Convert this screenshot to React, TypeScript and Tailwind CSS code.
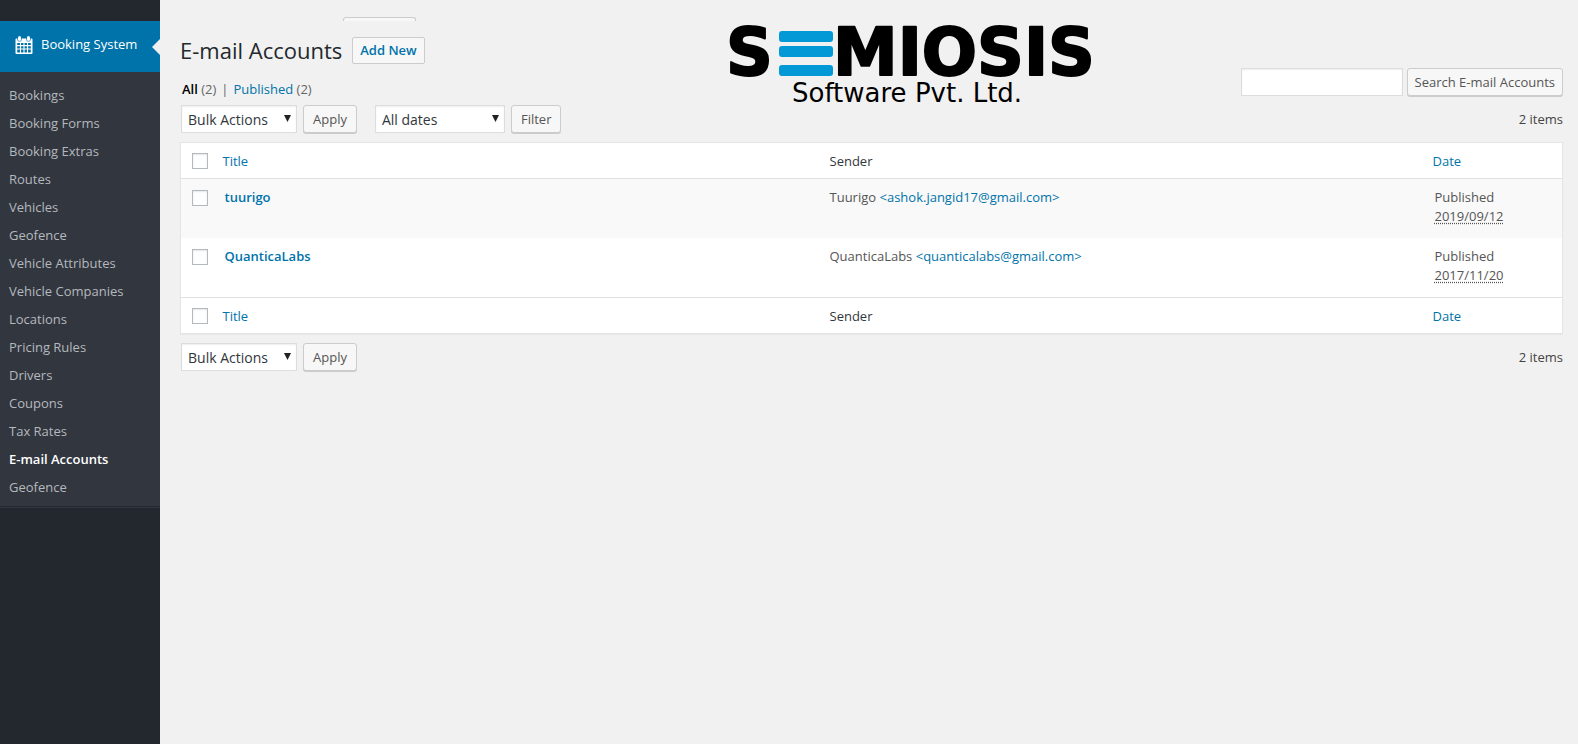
import type { ReactNode } from "react";

interface Account {
  title: string;
  sender: string;
  email: string;
  date: string;
}

const MENU_ITEMS = [
  "Bookings",
  "Booking Forms",
  "Booking Extras",
  "Routes",
  "Vehicles",
  "Geofence",
  "Vehicle Attributes",
  "Vehicle Companies",
  "Locations",
  "Pricing Rules",
  "Drivers",
  "Coupons",
  "Tax Rates",
  "E-mail Accounts",
  "Geofence",
];

const ACCOUNTS: Account[] = [
  { title: "tuurigo", sender: "Tuurigo", email: "ashok.jangid17@gmail.com", date: "2019/09/12" },
  { title: "QuanticaLabs", sender: "QuanticaLabs", email: "quanticalabs@gmail.com", date: "2017/11/20" },
];

function CalendarIcon() {
  return (
    <svg width="18" height="18" viewBox="0 0 18 18" fill="white" aria-hidden="true">
      <rect x="3" y="0" width="3" height="5" rx="1.5" />
      <rect x="12" y="0" width="3" height="5" rx="1.5" />
      <path
        fillRule="evenodd"
        d="M1.5 2.5H2.4V4Q2.4 5.6 4.5 5.6T6.6 4V2.5H11.4V4Q11.4 5.6 13.5 5.6T15.6 4V2.5H16.5Q17.5 2.5 17.5 3.5V17Q17.5 18 16.5 18H1.5Q.5 18 .5 17V3.5Q.5 2.5 1.5 2.5ZM2.2 7V16.4H15.8V7Z"
      />
      <path d="M2 9.6H16M2 13H16M5.5 7V17M9 7V17M12.5 7V17" stroke="white" strokeWidth="1.1" />
    </svg>
  );
}

function Logo() {
  return (
    <svg width="376" height="84" viewBox="0 0 376 84" className="overflow-visible" role="img" aria-label="Semiosis Software Pvt. Ltd.">
      <g className="font-['DejaVu_Sans'] font-bold" fontSize="65" fill="black" stroke="black" strokeWidth="2" strokeLinejoin="round">
        <text x="4" y="54">S</text>
        <text x="111" y="54">MIOSIS</text>
      </g>
      <g fill="#0299d6">
        <rect x="57" y="10" width="54" height="11" rx="3" />
        <rect x="57" y="25" width="54" height="11" rx="3" />
        <rect x="57" y="44" width="54" height="11" rx="3" />
      </g>
      <text x="70" y="81" className="font-['DejaVu_Sans']" fontSize="26" fill="black">
        Software Pvt. Ltd.
      </text>
    </svg>
  );
}

function Button({ children, padding = "px-[9px]" }: { children: ReactNode; padding?: string }) {
  return (
    <button
      type="button"
      className={`h-7 rounded-[3px] border border-[#ccc] bg-[#f7f7f7] text-[13px] leading-[26px] whitespace-nowrap text-[#555] shadow-[0_1px_0_#ccc] ${padding}`}
    >
      {children}
    </button>
  );
}

function Select({ label, option, width }: { label: string; option: string; width: string }) {
  return (
    <div className={`relative ${width}`}>
      <select
        aria-label={label}
        className="block h-7 w-full appearance-none border border-[#ddd] bg-white pl-[6px] text-[14px] text-[#32373c] shadow-[inset_0_1px_2px_rgba(0,0,0,0.07)]"
      >
        <option>{option}</option>
      </select>
      <svg className="pointer-events-none absolute top-[10px] right-[6px]" width="7" height="7" viewBox="0 0 7 7" aria-hidden="true">
        <path d="M0 0H7L3.5 7Z" fill="#222" />
      </svg>
    </div>
  );
}

function Checkbox({ label }: { label: string }) {
  return (
    <input
      type="checkbox"
      aria-label={label}
      className="block size-4 appearance-none border border-[#b4b9be] bg-white shadow-[inset_0_1px_2px_rgba(0,0,0,0.1)]"
    />
  );
}

function HeadingRow() {
  return (
    <tr className="h-9 text-[#32373c]">
      <td className="pl-[11px]">
        <Checkbox label="Select all" />
      </td>
      <th scope="col" className="px-2 pt-[2px] text-left font-normal">
        <a href="#title" className="text-[#0073aa]">Title</a>
      </th>
      <th scope="col" className="px-[10px] pt-[2px] text-left font-normal">Sender</th>
      <th scope="col" className="px-2 pt-[2px] text-left font-normal">
        <a href="#date" className="text-[#0073aa]">Date</a>
      </th>
    </tr>
  );
}

function AccountsTable() {
  return (
    <table className="w-full table-fixed border-collapse border border-[#e5e5e5] bg-white text-[13px] leading-[19px] text-[#555] shadow-[0_1px_1px_rgba(0,0,0,0.04)]">
      <colgroup>
        <col className="w-[34px]" />
        <col />
        <col />
        <col className="w-[138px]" />
      </colgroup>
      <thead className="border-b border-[#e1e1e1]">
        <HeadingRow />
      </thead>
      <tbody>
        {ACCOUNTS.map((account) => (
          <tr key={account.title} className="h-[59px] align-top last:h-[60px] odd:bg-[#f9f9f9]">
            <td className="pt-[11px] pl-[11px]">
              <Checkbox label={`Select ${account.title}`} />
            </td>
            <td className="px-[10px] pt-[9px]">
              <a href="#edit" className="font-semibold text-[#0073aa]">{account.title}</a>
            </td>
            <td className="px-[10px] pt-[9px]">
              {account.sender}{" "}
              <a href={`mailto:${account.email}`} className="text-[#0073aa]">&lt;{account.email}&gt;</a>
            </td>
            <td className="px-[10px] pt-[9px]">
              Published
              <br />
              <abbr title={account.date} className="underline decoration-dotted underline-offset-2">{account.date}</abbr>
            </td>
          </tr>
        ))}
      </tbody>
      <tfoot className="border-t border-[#e1e1e1]">
        <HeadingRow />
      </tfoot>
    </table>
  );
}

function Sidebar() {
  return (
    <nav className="w-40 shrink-0 bg-[#23282f] pt-[21px]">
      <a href="#booking" className="relative flex h-[51px] items-center gap-2 bg-[#0073aa] pb-1 pl-[15px] text-[13px] text-white">
        <CalendarIcon />
        Booking System
        <span className="absolute top-[18px] right-0 border-y-8 border-r-8 border-y-transparent border-r-[#f1f1f1]" />
      </a>
      <ul className="bg-[#32363f] pt-[9px] pb-[5px]">
        {MENU_ITEMS.map((item, i) => (
          <li key={i}>
            <a
              href="#menu"
              className={`block pl-[9px] text-[13px] leading-7 ${item === "E-mail Accounts" ? "font-semibold text-white" : "text-[#b4b9be]"}`}
            >
              {item}
            </a>
          </li>
        ))}
      </ul>
      <div className="h-[2px] border-b border-[#32363f]" />
    </nav>
  );
}

export default function App() {
  return (
    <div className="flex min-h-screen bg-[#f1f1f1] font-['Open_Sans',sans-serif] text-[13px] text-[#444]">
      <Sidebar />
      <main className="min-w-0 flex-1 pr-[15px] pl-5">
        <div className="flex h-[21px] items-end overflow-hidden pl-[163px]">
          <div className="h-1 w-[73px] rounded-t-[3px] border border-b-0 border-[#ccc] bg-[#f7f7f7]" />
        </div>
        <header className="flex h-[84px] justify-between">
          <div className="w-[542px] pt-[15px]">
            <div className="flex items-center gap-[10px]">
              <h1 className="text-[22px] leading-7 text-[#23282d]">E-mail Accounts</h1>
              <a
                href="#new"
                className="rounded-[2px] border border-[#ccc] bg-[#f7f7f7] px-[7px] text-[13px] leading-[25px] font-semibold text-[#0073aa]"
              >
                Add New
              </a>
            </div>
            <div className="flex gap-[5px] pt-[15px] pl-[2px] leading-5 text-[#666]">
              <span><a href="#all" className="font-semibold text-black">All</a> (2)</span>
              <span>|</span>
              <span><a href="#published" className="text-[#0073aa]">Published</a> (2)</span>
            </div>
          </div>
          <Logo />
          <form className="flex flex-1 items-start justify-end gap-1 pt-[47px]">
            <input
              type="search"
              aria-label="Search E-mail Accounts"
              className="h-7 w-[162px] border border-[#ddd] bg-white px-2 shadow-[inset_0_1px_2px_rgba(0,0,0,0.07)]"
            />
            <Button padding="px-[7px]">Search E-mail Accounts</Button>
          </form>
        </header>
        <div className="flex items-center pb-[9px] pl-px">
          <Select label="Bulk action" option="Bulk Actions" width="w-[116px]" />
          <div className="pr-[18px] pl-[6px]"><Button>Apply</Button></div>
          <Select label="Filter by date" option="All dates" width="w-[130px]" />
          <div className="pl-[6px]"><Button>Filter</Button></div>
          <span className="ml-auto pt-[2px]">2 items</span>
        </div>
        <AccountsTable />
        <div className="flex items-center pt-[9px] pl-px">
          <Select label="Bulk action" option="Bulk Actions" width="w-[116px]" />
          <div className="pl-[6px]"><Button>Apply</Button></div>
          <span className="ml-auto pt-[2px]">2 items</span>
        </div>
      </main>
    </div>
  );
}
